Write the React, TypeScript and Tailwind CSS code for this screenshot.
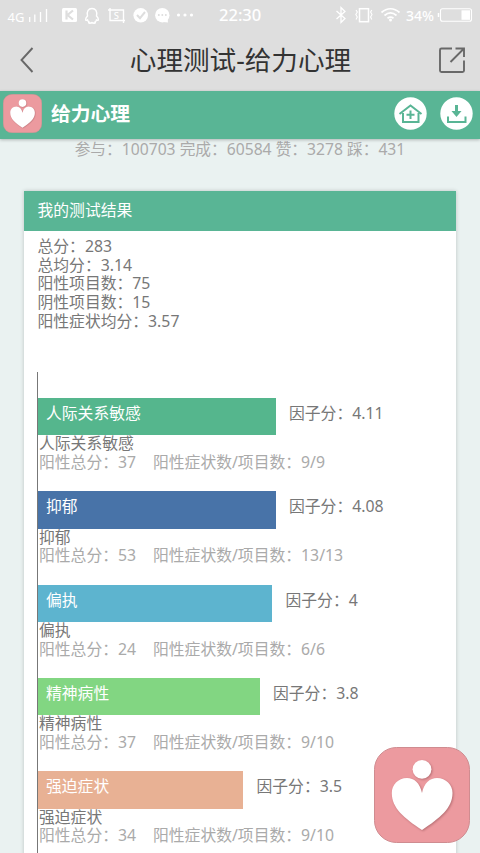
import React from 'react';

interface Factor {
  name: string;
  total: number;
  items: string;
  score: string;
  color: string;
  width: string;
}

const FACTORS: Factor[] = [
  { name: '人际关系敏感', total: 37, items: '9/9', score: '4.11', color: 'bg-[#55b68d]', width: 'w-[237.5px]' },
  { name: '抑郁', total: 53, items: '13/13', score: '4.08', color: 'bg-[#4873a8]', width: 'w-[237.5px]' },
  { name: '偏执', total: 24, items: '6/6', score: '4', color: 'bg-[#5db4cf]', width: 'w-[234px]' },
  { name: '精神病性', total: 37, items: '9/10', score: '3.8', color: 'bg-[#82d682]', width: 'w-[221.5px]' },
  { name: '强迫症状', total: 34, items: '9/10', score: '3.5', color: 'bg-[#e8b194]', width: 'w-[205px]' },
];

const SUMMARY = ['总分：283', '总均分：3.14', '阳性项目数：75', '阴性项目数：15', '阳性症状均分：3.57'];

const HeartLogo: React.FC<{ className: string }> = ({ className }) => (
  <svg viewBox="0 0 96 96" className={className}>
    <rect x="0.5" y="0.5" width="95" height="95" rx="22" fill="#ec9a9f" stroke="#cf8c90" strokeWidth="1" />
    <g className="drop-shadow-[1px_1px_1px_rgba(120,60,65,0.45)]" fill="#fff">
      <circle cx="48" cy="22.3" r="9.4" />
      <path d="M48 46C46 36 40 31 33 31C24 31 17.800 38 17.800 46C17.800 61 30 71 48 83C66 71 78.500 61 78.500 46C78.500 38 72 31 63 31C56 31 50 36 48 46Z" />
    </g>
  </svg>
);

const StatusBar = () => (
  <div className="flex h-[30px] shrink-0 items-center text-white">
    <svg width="200" height="30" viewBox="0 0 200 30" fill="none" stroke="#fff">
      <text x="7.500" y="22" fontSize="13" fill="#fff" stroke="none" className="font-['Noto_Sans']">4G</text>
      <path d="M29.700 22V17M34.800 22V14.500M40.500 22V12M46.500 22V9" strokeWidth="1.300" />
      <rect x="62" y="8" width="15" height="14" rx="1.500" fill="#fff" stroke="none" />
      <path d="M66.500 10.500V19.500M73 10.500L67.500 15L73 19.500" stroke="#dedede" strokeWidth="2.200" />
      <path d="M87.500 16C85.500 18 84.500 21.500 87.500 20C87.500 21 88.500 21.500 89 22C87.500 23.500 91 23.500 92 22.500C93 23.500 96.500 23.500 95 22C95.500 21.500 96.500 21 96.500 20C99.500 21.500 98.500 18 96.500 16C97.500 11 95.500 8.500 92 8.500C88.500 8.500 86.500 11 87.500 16Z" strokeWidth="1.400" />
      <path d="M108 10H123.500V20.500M110 8V20.500H125M123.500 20V23" strokeWidth="1.400" />
      <text x="113.700" y="18.500" fontSize="9.500" fill="#fff" stroke="none" className="font-['Noto_Sans'] font-medium">S</text>
      <circle cx="140.700" cy="15.300" r="7.300" fill="#fff" stroke="none" />
      <path d="M137 15L140 18.200L145 12" stroke="#dedede" strokeWidth="2" />
      <circle cx="162.300" cy="15.200" r="7.200" fill="#fff" stroke="none" />
      <path d="M163 22L168 22.500L167.500 18Z" fill="#fff" stroke="none" />
      <g fill="#dedede" stroke="none">
        <circle cx="158.800" cy="15" r="1" />
        <circle cx="162.300" cy="15" r="1" />
        <circle cx="165.800" cy="15" r="1" />
      </g>
      <g fill="#fff" stroke="none">
        <circle cx="178.500" cy="15" r="1.600" />
        <circle cx="185" cy="15" r="1.600" />
        <circle cx="191.500" cy="15" r="1.600" />
      </g>
    </svg>
    <span className="ml-[19px] w-[60px] text-[16.5px] font-medium leading-[30px]">22:30</span>
    <svg width="201" height="30" viewBox="279 0 201 30" fill="none" stroke="#fff">
      <path d="M336.500 11L345 18.500L341 22.500V7.500L345 11.500L336.500 19" strokeWidth="1.300" />
      <rect x="359.500" y="8.700" width="9" height="13" strokeWidth="1.500" />
      <path d="M356 10L357.300 12L355.800 14.500L357.300 17L356 19.500M371.800 10L370.600 12L372 14.500L370.600 17L371.800 19.500" strokeWidth="1.100" />
      <path d="M381.500 12.500C387 7.500 394 7.500 399.500 12.500M384.500 15.500C388.500 12 392.500 12 396.500 15.500M387.500 18.200C389.500 16.800 391.500 16.800 393.500 18.200" strokeWidth="1.700" />
      <circle cx="390.500" cy="20" r="1.500" fill="#fff" stroke="none" />
      <text x="406" y="20.500" fontSize="15" textLength="28" lengthAdjust="spacingAndGlyphs" fill="#fff" stroke="none" className="font-['Noto_Sans'] font-medium">34%</text>
      <rect x="440.500" y="8.700" width="31" height="12.600" rx="2" strokeWidth="1.100" />
      <path d="M438.500 13V17" strokeWidth="1.500" />
      <rect x="461.500" y="10.300" width="8.500" height="9.500" fill="#fff" stroke="none" />
    </svg>
  </div>
);

const TitleBar = () => (
  <div className="flex h-[61px] shrink-0 items-center justify-between pl-5 pr-[14px]">
    <svg width="14" height="28" viewBox="0 0 14 28" fill="none" stroke="#686868" strokeWidth="1.900">
      <path d="M12.500 1L1.500 13L12.500 25" />
    </svg>
    <h1 className="ml-[9px] text-[26.6px] leading-[59px] text-[#333]">心理测试-给力心理</h1>
    <svg width="28" height="28" viewBox="0 0 28 28" fill="none" stroke="#686868" strokeWidth="1.900">
      <path d="M14 1.500H3.500Q2 1.500 2 3V23.500Q2 25 3.500 25H24.500Q26 25 26 23.500V13.500M17.500 1.500H26V10M25.500 2L12.500 15" />
    </svg>
  </div>
);

const SiteHeader = () => (
  <header className="relative flex h-12 shrink-0 items-center bg-[#59b595] pl-[3px] pr-[7px] shadow-[0_1px_3px_rgba(0,0,0,0.25)]">
    <HeartLogo className="mb-[3px] h-[39px] w-[39px]" />
    <span className="mb-[3px] ml-[9px] text-[19.8px] font-bold text-white">给力心理</span>
    <div className="mb-[4px] ml-auto flex gap-[13px]">
      <svg width="33" height="33" viewBox="0 0 33 33" fill="none" stroke="#59b595" strokeWidth="2">
        <circle cx="16.500" cy="16.500" r="16.200" fill="#fff" stroke="none" />
        <path d="M5.500 17L16.500 8.500L27.500 17M9 16V25H24.500V16M16.500 13.500V22M12.500 17.800H20.500" />
      </svg>
      <svg width="33" height="33" viewBox="0 0 33 33" fill="none" stroke="#59b595" strokeWidth="2">
        <circle cx="16.500" cy="16.500" r="16.200" fill="#fff" stroke="none" />
        <path d="M8 19.500V25H25.500V19.500" />
        <path d="M16.500 8V15" strokeWidth="3" />
        <path d="M11.500 14H21.500L16.500 20Z" fill="#59b595" stroke="none" />
      </svg>
    </div>
  </header>
);

const FactorRow: React.FC<{ factor: Factor }> = ({ factor }) => (
  <div className="mb-[19.67px]">
    <div className="flex h-[37.33px]">
      <div className={`${factor.color} ${factor.width} pl-2 pt-1.5 text-white`}>{factor.name}</div>
      <div className="ml-[13.5px] pt-1.5 text-[#777]">因子分：{factor.score}</div>
    </div>
    <div className="-mt-px pl-px">{factor.name}</div>
    <div className="flex pl-px text-[#aaa]">
      <div className="w-[114px]">阳性总分：{factor.total}</div>
      <div>阳性症状数/项目数：{factor.items}</div>
    </div>
  </div>
);

export default function App() {
  return (
    <div className="relative flex h-[853px] w-[480px] flex-col overflow-hidden bg-[#eaf2f1] font-['Noto_Sans','Noto_Sans_CJK_SC',sans-serif]">
      <div className="shrink-0 bg-[#dedede]">
        <StatusBar />
        <TitleBar />
      </div>
      <SiteHeader />

      <p className="h-[52px] shrink-0 whitespace-nowrap text-center text-[15.7px] leading-[20px] text-[#aaa]">
        参与：100703 完成：60584 赞：3278 踩：431
      </p>

      <main className="mx-6 shrink-0 bg-white text-[15.8px] leading-[18.67px] text-[#777] shadow-[0_0_4px_rgba(0,0,0,0.2)]">
        <h2 className="h-10 bg-[#59b595] pl-[13.5px] leading-[39px] text-white">我的测试结果</h2>
        <div className="h-[141px] pl-[13.5px] pt-1.5">
          {SUMMARY.map((line) => (
            <div key={line}>{line}</div>
          ))}
        </div>
        <div className="ml-[13px] border-l border-[#777] pb-5 pt-[26px]">
          {FACTORS.map((factor) => (
            <FactorRow key={factor.name} factor={factor} />
          ))}
        </div>
      </main>

      {/* Floating shortcut over the results */}
      <HeartLogo className="absolute left-[374px] top-[747px] h-24 w-24" />
    </div>
  );
}
